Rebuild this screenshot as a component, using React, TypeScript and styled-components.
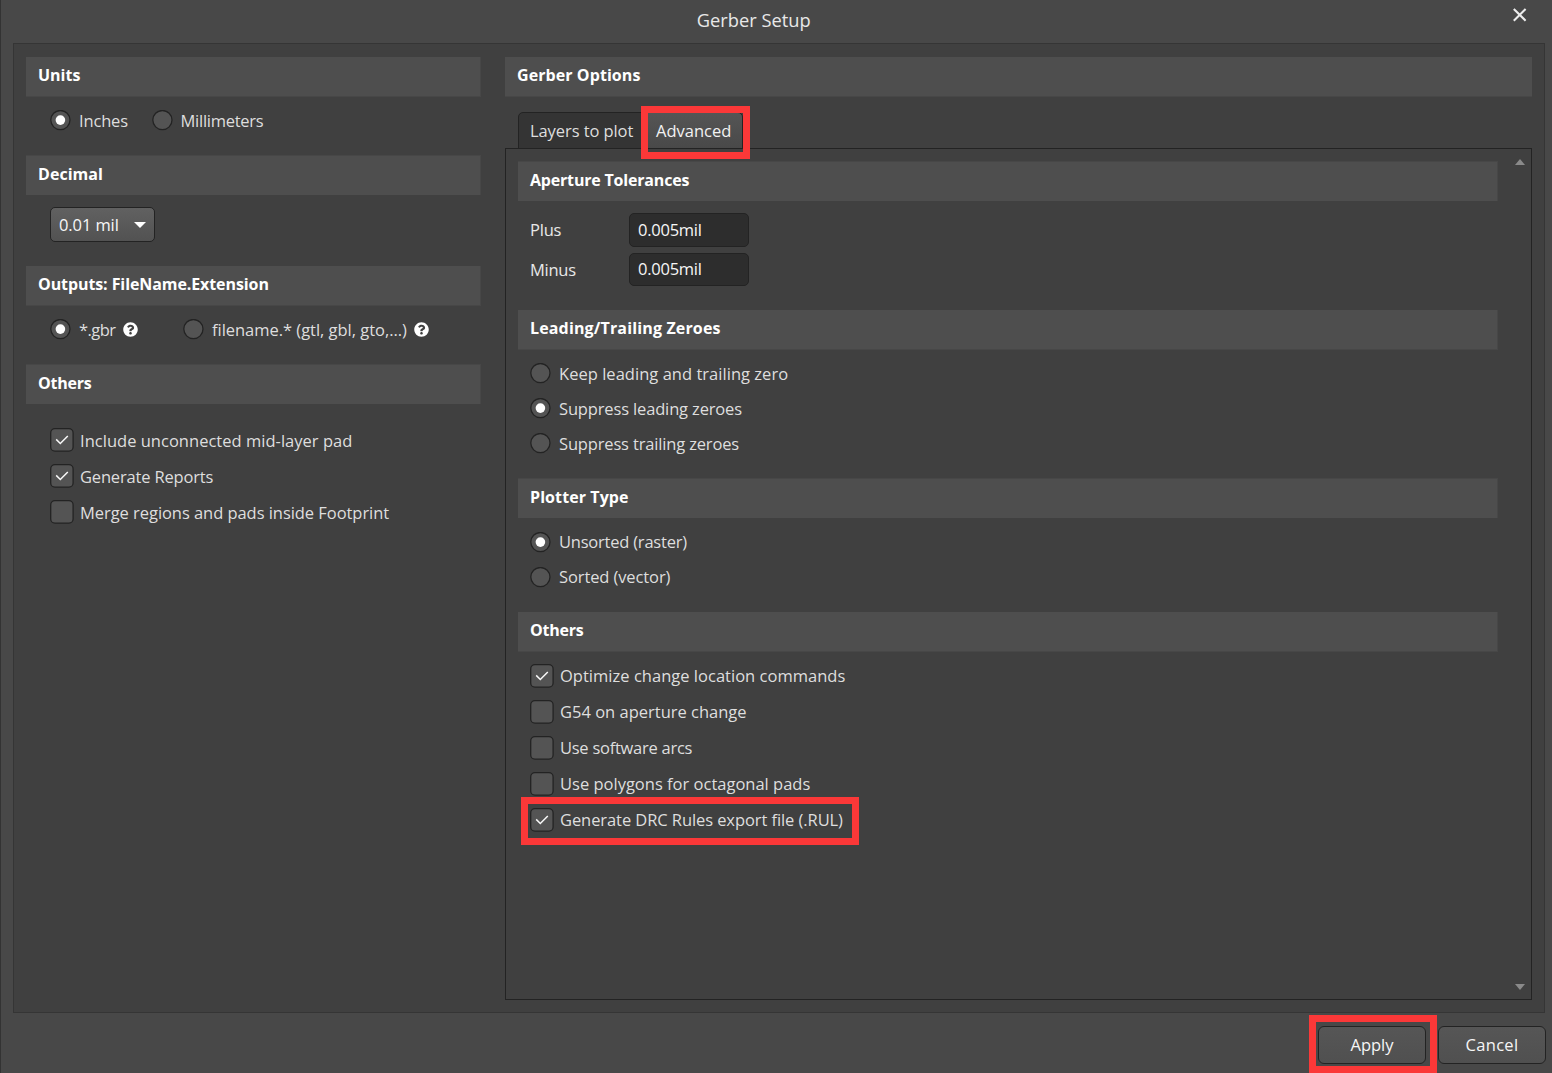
import React, { useState } from 'react';
import type { ReactNode } from 'react';
import styled, { createGlobalStyle, css } from 'styled-components';
import { FaQuestionCircle } from 'react-icons/fa';

const color = {
  window: '#484848',
  panel: '#404040',
  panelLine: '#353535',
  header: '#4e4e4e',
  headerEdge: '#474747',
  line: '#232323',
  control: '#545454',
  field: '#2d2d2d',
  text: '#dedede',
  bright: '#f6f6f6',
  mark: '#fb3838',
};

const GlobalStyle = createGlobalStyle`
  *, *::before, *::after { box-sizing: border-box; }
  html, body { margin: 0; padding: 0; background: ${color.window}; }
  body { overflow: hidden; }
  button, input { font: inherit; }
`;

const Dialog = styled.div`
  width: 1552px;
  height: 1073px;
  display: flex;
  flex-direction: column;
  background: ${color.window};
  border-left: 1px solid #333;
  color: ${color.text};
  font-family: 'Open Sans', 'Noto Sans', sans-serif;
  font-size: 16.5px;
  line-height: 21px;
  overflow: hidden;
`;

const TitleBar = styled.header`
  flex: none;
  height: 43px;
  display: grid;
  grid-template-columns: 1fr auto 1fr;
  padding: 7.5px 24.5px 0 22px;
`;

const Title = styled.h1`
  grid-column: 2;
  margin: 0 0 0 -43px;
  padding-top: 2.5px;
  font-size: 18.3px;
  font-weight: 400;
  line-height: 20px;
  color: #e8e8e8;
`;

const CloseButton = styled.button`
  justify-self: end;
  align-self: start;
  display: flex;
  padding: 0;
  border: 0;
  background: none;
  color: #ececec;
`;

const Body = styled.main`
  flex: none;
  height: 970px;
  margin: 0 7px 0 12px;
  padding: 13px 12px 12px 12px;
  display: flex;
  gap: 24px;
  background: ${color.panel};
  border: 1px solid ${color.panelLine};
`;

const LeftColumn = styled.div`
  width: 455px;
  display: flex;
  flex-direction: column;
`;

const RightColumn = styled.div`
  width: 1027px;
  display: flex;
  flex-direction: column;
`;

const SectionHeader = styled.h2<{ $edge: 'top' | 'bottom'; $ls?: number; $flush?: boolean }>`
  flex: none;
  height: 40px;
  margin: 0;
  padding: 0 12px 2px 12px;
  display: flex;
  align-items: center;
  background: ${color.header};
  border-${p => p.$edge}: 1px solid ${color.headerEdge};
  ${p => !p.$flush && css`border-right: 1px solid ${color.headerEdge};`}
  font-size: 16px;
  font-weight: 700;
  color: #fff;
  letter-spacing: ${p => p.$ls ?? 0}px;
`;

const SectionBody = styled.div<{ $height: number; $top: number; $left: number }>`
  flex: none;
  height: ${p => p.$height}px;
  padding: ${p => p.$top}px 0 0 ${p => p.$left}px;
`;

const RadioLine = styled.div<{ $gap: number }>`
  display: flex;
  gap: ${p => p.$gap}px;
`;

const Stack = styled.div<{ $gap: number }>`
  display: flex;
  flex-direction: column;
  align-items: flex-start;
  gap: ${p => p.$gap}px;
`;

const Option = styled.label<{ $gap: number; $width?: number }>`
  position: relative;
  display: flex;
  align-items: center;
  gap: ${p => p.$gap}px;
  width: ${p => (p.$width ? `${p.$width}px` : 'auto')};
  white-space: nowrap;

  svg { flex: none; display: block; }
`;

const Caption = styled.span<{ $ls?: number; $shift?: number }>`
  letter-spacing: ${p => p.$ls ?? 0}px;
  margin-top: ${p => p.$shift ?? 0}px;
`;

const HelpMark = styled(FaQuestionCircle)<{ $space: number }>`
  width: 15px;
  height: 15px;
  margin: -1px 0 0 ${p => p.$space}px;
  color: #fff;
`;

const Highlight = styled.span<{ $top: number; $left: number; $width: number; $height: number }>`
  position: absolute;
  z-index: 2;
  top: ${p => p.$top}px;
  left: ${p => p.$left}px;
  width: ${p => p.$width}px;
  height: ${p => p.$height}px;
  border: 7px solid ${color.mark};
  pointer-events: none;
`;

const SelectBox = styled.button`
  width: 105px;
  height: 35px;
  display: flex;
  align-items: center;
  justify-content: space-between;
  padding: 0 8px 0 8px;
  border: 1.5px solid ${color.line};
  border-radius: 5px;
  background: linear-gradient(#616161, #525252);
  color: ${color.bright};
`;

const Tabs = styled.div`
  position: relative;
  z-index: 1;
  flex: none;
  display: flex;
  margin-top: 15px;
  padding-left: 13px;
  height: 37px;
`;

const Tab = styled.button<{ $active?: boolean; $width: number; $ls?: number }>`
  width: ${p => p.$width}px;
  padding: 0 0 1px 11px;
  text-align: left;
  white-space: nowrap;
  border: 1px solid ${color.line};
  border-radius: ${p => (p.$active ? '0 5px 0 0' : '5px 0 0 0')};
  background: ${p => (p.$active ? 'linear-gradient(#555, #494949)' : '#343434')};
  color: ${p => (p.$active ? '#f2f2f2' : color.text)};
  letter-spacing: ${p => p.$ls ?? 0}px;
`;

const TabPanel = styled.div`
  flex: none;
  height: 852px;
  margin-top: -1px;
  display: flex;
  justify-content: space-between;
  border: 1px solid ${color.line};
  padding: 12px 6px 0 12px;
`;

const PanelContent = styled.div`
  width: 980px;
  display: flex;
  flex-direction: column;
`;

const ScrollTrack = styled.div`
  display: flex;
  flex-direction: column;
  justify-content: space-between;
  height: 831px;
  margin-top: -2px;

  svg { display: block; }
`;

const FieldGrid = styled.div`
  display: grid;
  grid-template-columns: 99px 120px;
  grid-template-rows: 34px 33px;
  row-gap: 6px;
  align-items: center;
  color: #e8e8e8;
`;

const Field = styled.input`
  width: 120px;
  height: 100%;
  padding: 0 8px 2px 8px;
  border: 1px solid ${color.line};
  border-radius: 5px;
  background: ${color.field};
  color: ${color.bright};
  letter-spacing: -0.25px;
  outline: none;
`;

const Footer = styled.footer`
  flex: none;
  display: flex;
  justify-content: flex-end;
  gap: 12px;
  padding: 13px 6px 0 0;
`;

const ActionSlot = styled.div`
  position: relative;
`;

const ActionButton = styled.button<{ $ls?: number }>`
  display: block;
  width: 108px;
  height: 38px;
  padding: 0 0 2px;
  border: 1.5px solid ${color.line};
  border-radius: 6px;
  background: linear-gradient(#565656, #505050);
  color: ${color.bright};
  letter-spacing: ${p => p.$ls ?? 0}px;
`;

function RadioIcon({ on }: { on: boolean }) {
  return (
    <svg width="21" height="21" viewBox="0 0 21 21">
      <circle cx="10.4" cy="10.1" r="9.6" fill={color.control} stroke={color.line} strokeWidth="1.3" />
      {on && <circle cx="10.4" cy="10.1" r="4.8" fill="#fff" />}
    </svg>
  );
}

function CheckIcon({ on }: { on: boolean }) {
  return (
    <svg width="24" height="24" viewBox="0 0 24 24">
      <rect x="0.7" y="0.7" width="22.4" height="22.4" rx="4.2" fill={color.control} stroke={color.line} strokeWidth="1.3" />
      {on && <path d="M6.2 11.4 10.3 15.5 17.8 8" fill="none" stroke="#f8f8f8" strokeWidth="1.5" />}
    </svg>
  );
}

type RadioProps = {
  on: boolean;
  onPick: () => void;
  ls?: number;
  width?: number;
  shift?: number;
  help?: number;
  children: ReactNode;
};

function Radio({ on, onPick, ls, width, shift, help, children }: RadioProps) {
  return (
    <Option $gap={8} $width={width} onClick={onPick}>
      <RadioIcon on={on} />
      <Caption $ls={ls} $shift={shift}>{children}</Caption>
      {help !== undefined && <HelpMark $space={help} />}
    </Option>
  );
}

type CheckProps = { initial?: boolean; ls?: number; shift?: number; children: ReactNode; mark?: ReactNode };

function Check({ initial = false, ls, shift, children, mark }: CheckProps) {
  const [on, setOn] = useState(initial);
  return (
    <Option $gap={6} onClick={() => setOn(!on)}>
      <CheckIcon on={on} />
      <Caption $ls={ls} $shift={shift}>{children}</Caption>
      {mark}
    </Option>
  );
}

export default function App() {
  const [unit, setUnit] = useState('in');
  const [output, setOutput] = useState('gbr');
  const [zeroes, setZeroes] = useState('leading');
  const [plotter, setPlotter] = useState('raster');

  return (
    <>
      <GlobalStyle />
      <Dialog>
        <TitleBar>
          <Title>Gerber Setup</Title>
          <CloseButton aria-label="Close">
            <svg width="16" height="14" viewBox="0 0 16 14">
              <path d="M1.8 0.9 13.6 12.7M13.6 0.9 1.8 12.7" stroke="currentColor" strokeWidth="2.1" />
            </svg>
          </CloseButton>
        </TitleBar>

        <Body>
          <LeftColumn>
            <SectionHeader $edge="bottom">Units</SectionHeader>
            <SectionBody $height={58} $top={13} $left={24}>
              <RadioLine $gap={0}>
                <Radio on={unit === 'in'} onPick={() => setUnit('in')} ls={-0.16} width={101.5}>Inches</Radio>
                <Radio on={unit === 'mm'} onPick={() => setUnit('mm')} ls={-0.26}>Millimeters</Radio>
              </RadioLine>
            </SectionBody>

            <SectionHeader $edge="top" $ls={0.05}>Decimal</SectionHeader>
            <SectionBody $height={71} $top={12} $left={24}>
              <SelectBox>
                <Caption $ls={-0.1}>0.01 mil</Caption>
                <svg width="12" height="6" viewBox="0 0 12 6"><path d="M0 0h12L6 6z" fill="#fff" /></svg>
              </SelectBox>
            </SectionBody>

            <SectionHeader $edge="bottom" $ls={-0.09}>Outputs: FileName.Extension</SectionHeader>
            <SectionBody $height={58} $top={13} $left={24}>
              <RadioLine $gap={0}>
                <Radio on={output === 'gbr'} onPick={() => setOutput('gbr')} ls={-0.55} width={133} help={-0.5}>*.gbr</Radio>
                <Radio on={output === 'name'} onPick={() => setOutput('name')} ls={-0.03} help={-0.5}>filename.* (gtl, gbl, gto,...)</Radio>
              </RadioLine>
            </SectionBody>

            <SectionHeader $edge="top" $ls={-0.25}>Others</SectionHeader>
            <SectionBody $height={130} $top={24} $left={24}>
              <Stack $gap={12}>
                <Check initial ls={0.02}>Include unconnected mid-layer pad</Check>
                <Check initial ls={-0.17}>Generate Reports</Check>
                <Check ls={-0.05}>Merge regions and pads inside Footprint</Check>
              </Stack>
            </SectionBody>
          </LeftColumn>

          <RightColumn>
            <SectionHeader $edge="bottom" $ls={0.08} $flush>Gerber Options</SectionHeader>
            <Tabs>
              <Tab $width={126} $ls={-0.08}>Layers to plot</Tab>
              <Tab $active $width={99}>Advanced</Tab>
              <Highlight $top={-6} $left={136} $width={109} $height={53} />
            </Tabs>
            <TabPanel>
              <PanelContent>
                <SectionHeader $edge="top" $ls={-0.19}>Aperture Tolerances</SectionHeader>
                <SectionBody $height={109} $top={12} $left={12}>
                  <FieldGrid>
                    <Caption $ls={-0.2} $shift={-2}>Plus</Caption>
                    <Field defaultValue="0.005mil" />
                    <Caption $ls={-0.25}>Minus</Caption>
                    <Field defaultValue="0.005mil" />
                  </FieldGrid>
                </SectionBody>

                <SectionHeader $edge="bottom" $ls={0.15}>Leading/Trailing Zeroes</SectionHeader>
                <SectionBody $height={128} $top={13} $left={12}>
                  <Stack $gap={14}>
                    <Radio on={zeroes === 'keep'} onPick={() => setZeroes('keep')} ls={0.03}>Keep leading and trailing zero</Radio>
                    <Radio on={zeroes === 'leading'} onPick={() => setZeroes('leading')} ls={-0.15}>Suppress leading zeroes</Radio>
                    <Radio on={zeroes === 'trailing'} onPick={() => setZeroes('trailing')} ls={-0.16}>Suppress trailing zeroes</Radio>
                  </Stack>
                </SectionBody>

                <SectionHeader $edge="top" $ls={0.09}>Plotter Type</SectionHeader>
                <SectionBody $height={94} $top={13.5} $left={12}>
                  <Stack $gap={14}>
                    <Radio on={plotter === 'raster'} onPick={() => setPlotter('raster')} ls={-0.22} shift={-1}>Unsorted (raster)</Radio>
                    <Radio on={plotter === 'vector'} onPick={() => setPlotter('vector')} ls={-0.11} shift={-1}>Sorted (vector)</Radio>
                  </Stack>
                </SectionBody>

                <SectionHeader $edge="bottom" $ls={-0.25}>Others</SectionHeader>
                <SectionBody $height={200} $top={12} $left={12}>
                  <Stack $gap={12}>
                    <Check initial ls={0.02} shift={-2}>Optimize change location commands</Check>
                    <Check ls={0} shift={-2}>G54 on aperture change</Check>
                    <Check ls={-0.26} shift={-2}>Use software arcs</Check>
                    <Check ls={0} shift={-2}>Use polygons for octagonal pads</Check>
                    <Check initial ls={-0.08} shift={-2} mark={<Highlight $top={-11} $left={-9} $width={338} $height={48} />}>
                      Generate DRC Rules export file (.RUL)
                    </Check>
                  </Stack>
                </SectionBody>
              </PanelContent>
              <ScrollTrack>
                <svg width="10" height="6" viewBox="0 0 10 6"><path d="M0 6h10L5 0z" fill="#8a8a8a" /></svg>
                <svg width="10" height="6" viewBox="0 0 10 6"><path d="M0 0h10L5 6z" fill="#8a8a8a" /></svg>
              </ScrollTrack>
            </TabPanel>
          </RightColumn>
        </Body>

        <Footer>
          <ActionSlot>
            <ActionButton>Apply</ActionButton>
            <Highlight $top={-11} $left={-9} $width={128} $height={58} />
          </ActionSlot>
          <ActionButton $ls={0.3}>Cancel</ActionButton>
        </Footer>
      </Dialog>
    </>
  );
}
